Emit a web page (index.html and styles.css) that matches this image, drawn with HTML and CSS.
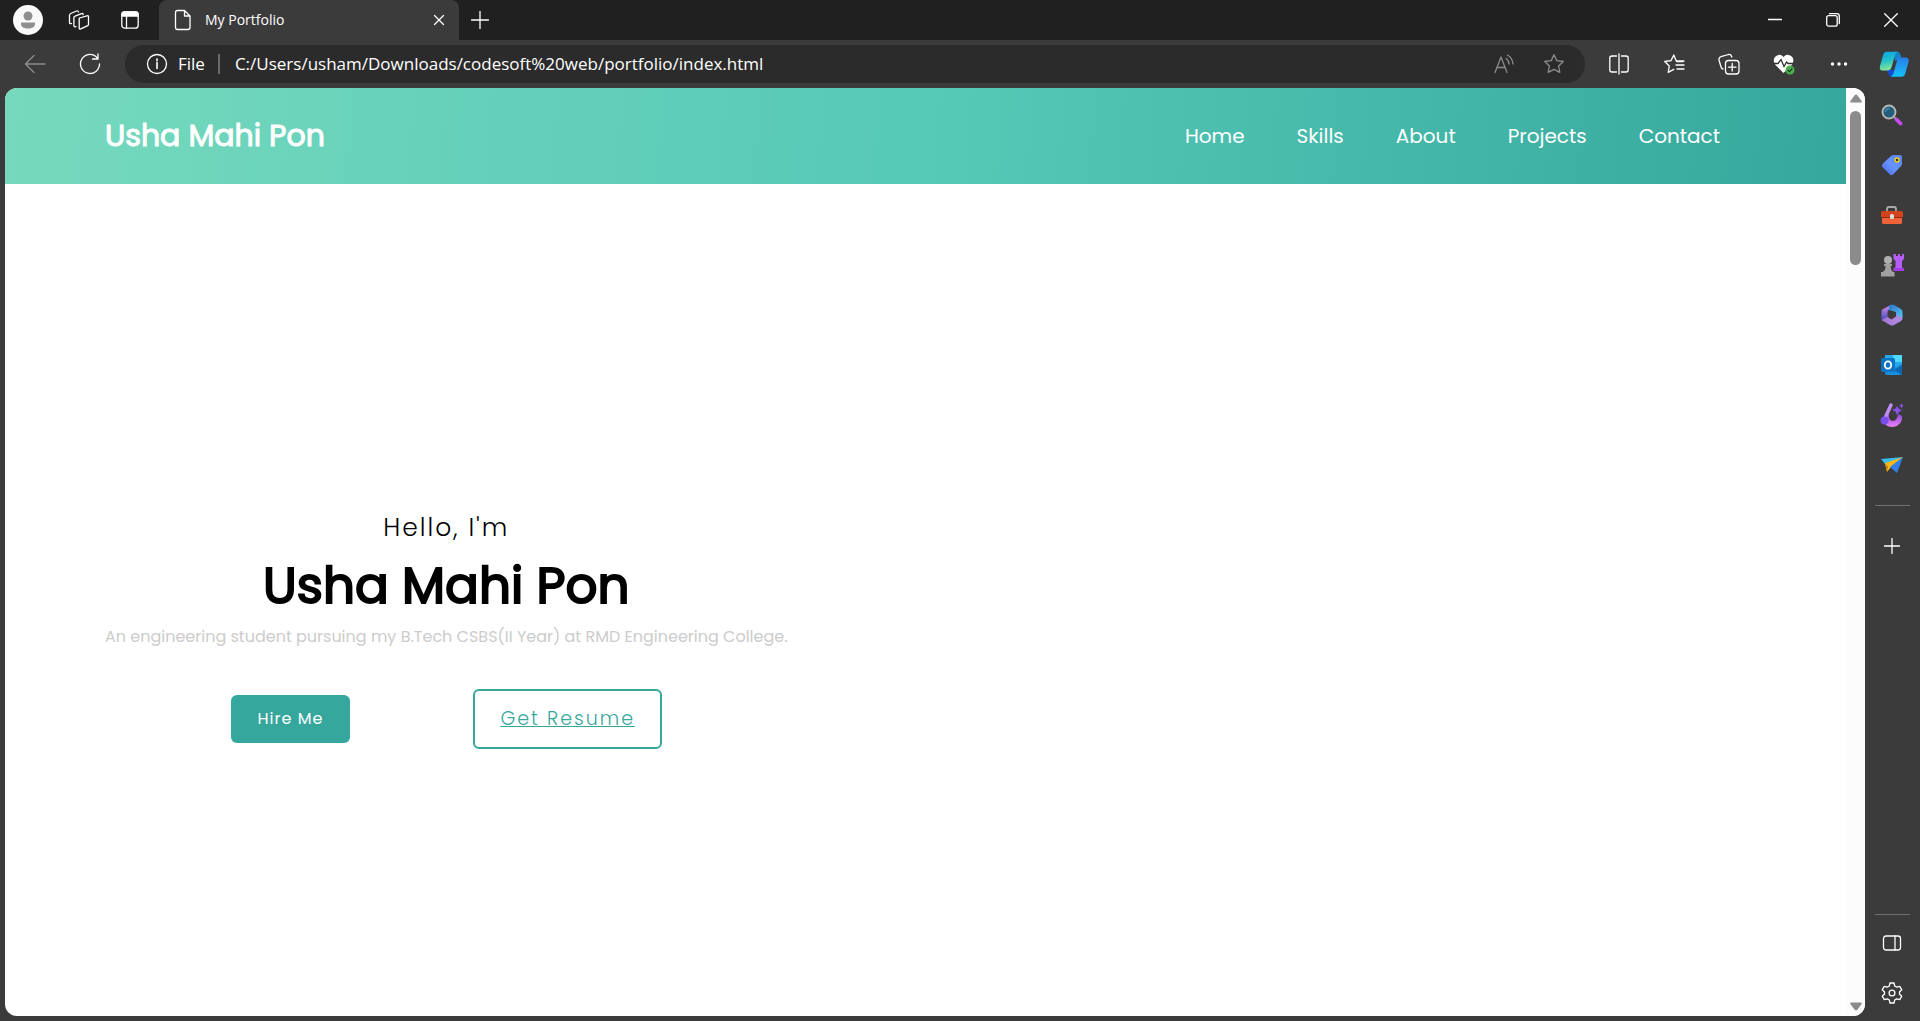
FILE: index.html
```html
<!DOCTYPE html>
<html lang="en">
<head>
<meta charset="utf-8">
<meta name="viewport" content="width=device-width, initial-scale=1">
<title>My Portfolio</title>
<link rel="stylesheet" href="styles.css">
</head>
<body>
<div class="browser">
  <div class="tabstrip">
    <div class="tabstrip-tools">
      <button class="icon-btn" aria-label="Profile"><svg width="30" height="30" viewBox="0 0 30 30"><circle cx="15" cy="15" r="15" fill="#fafafa"/><circle cx="15" cy="11" r="4.5" fill="#8f8f8f"/><path d="M8 17.5h14v1.5c0 3-3 4.5-7 4.5S8 22 8 19z" fill="#8f8f8f"/></svg></button>
      <button class="icon-btn" aria-label="Workspaces"><svg class="line" width="22" height="22" viewBox="0 0 22 22"><path d="M11.5 9l7.500-2.200q1.500-.4 1.500 1v7.400q0 1.200-1.200 1.700l-6.600 3q-1.500.6-1.500-1v-8.200q0-1.300.3-1.700zM8 17.500l-.9.300q-1.200.2-1.200-1.200V8.800q0-1.300 1.200-1.700L13.500 4.600q1.500-.5 1.700 1M3.500 14.500q-2 .7-2-1V6.200Q1.500 5 2.700 4.500L8.500 2Q10 1.500 10.500 3"/></svg></button>
      <button class="icon-btn" aria-label="Tab actions"><svg class="line" width="20" height="20" viewBox="0 0 20 20"><rect x="1.800" y="1.800" width="16.400" height="16.400" rx="3"/><path d="M2 3.500q0-1.500 2-1.500h12q2 0 2 1.500V6H2z" fill="#fff"/><path d="M6.500 6v12"/></svg></button>
    </div>
    <div class="tab">
      <svg class="line" width="18" height="22" viewBox="0 0 18 22"><path d="M3.500 1.500h7l5.500 5.500v11.500q0 2-2 2H3.500q-2 0-2-2v-15q0-2 2-2zM10.500 1.500V7H16"/></svg>
      <span class="tab-title">My Portfolio</span>
      <button class="icon-btn tab-close" aria-label="Close tab"><svg class="line" width="12" height="12" viewBox="0 0 12 12"><path d="M1.500 1.500l9 9M10.500 1.500l-9 9"/></svg></button>
    </div>
    <button class="icon-btn new-tab" aria-label="New tab"><svg class="line" width="18" height="18" viewBox="0 0 18 18"><path d="M9 .5v17M.5 9h17"/></svg></button>
    <div class="window-controls">
      <button class="icon-btn" aria-label="Minimize"><svg class="line" width="14" height="14" viewBox="0 0 14 14"><path d="M.5 6.500h13"/></svg></button>
      <button class="icon-btn" aria-label="Restore"><svg class="line" width="14" height="14" viewBox="0 0 14 14"><rect x=".7" y="2.700" width="10.500" height="10.500" rx="2"/><path d="M3.500.7H11q2.300 0 2.300 2.300v7.500"/></svg></button>
      <button class="icon-btn" aria-label="Close"><svg class="line" width="14" height="14" viewBox="0 0 14 14"><path d="M.7.7l12.600 12.600M13.300.7L.7 13.300"/></svg></button>
    </div>
  </div>

  <div class="toolbar">
    <div class="nav-buttons">
      <button class="icon-btn muted" aria-label="Back"><svg class="line" width="22" height="20" viewBox="0 0 22 20"><path d="M10 1.500L1.500 10l8.500 8.500M1.500 10H21"/></svg></button>
      <button class="icon-btn" aria-label="Refresh"><svg class="line" width="22" height="22" viewBox="0 0 22 22"><path d="M20.500 11a9.500 9.500 0 1 1-3.500-7.400L18.800 5.500M19 1v5h-5.500"/></svg></button>
    </div>
    <div class="address">
      <svg class="line" width="22" height="22" viewBox="0 0 22 22"><circle cx="11" cy="11" r="9.500"/><path d="M11 9.500v6M11 6v1.800" stroke-width="1.600"/></svg>
      <label class="scheme" for="url">File</label>
      <input class="url" id="url" type="text" value="C:/Users/usham/Downloads/codesoft%20web/portfolio/index.html">
      <button class="icon-btn muted" aria-label="Read aloud"><svg class="line" width="22" height="22" viewBox="0 0 22 22"><path d="M2 19.500L8 4l6 15.500M4 14.500h8M13 5.500q3 2 3 5.500M14.500 2q5 3 5.500 9"/></svg></button>
      <button class="icon-btn muted" aria-label="Add to favorites"><svg class="line" width="22" height="22" viewBox="0 0 22 22"><path d="M11 1.800l2.800 5.800 6.500.9-4.700 4.500 1.200 6.400-5.800-3-5.800 3 1.200-6.400L1.700 8.500l6.500-.9z"/></svg></button>
    </div>
    <div class="actions">
      <button class="icon-btn" aria-label="Split screen"><svg class="line" width="22" height="22" viewBox="0 0 22 22"><path d="M8.500 3H4Q1.800 3 1.800 5.200v11.600Q1.800 19 4 19h4.500M13.500 3H18q2.200 0 2.200 2.200v11.600Q20.200 19 18 19h-4.500M11 1v20"/></svg></button>
      <button class="icon-btn" aria-label="Favorites"><svg class="line" width="22" height="22" viewBox="0 0 22 22"><path d="M20 8.500h-6.500L10.800 2 8 7.600l-6.300.9L6.300 13 5.200 19.400l5.600-3M13 12h8M14 16h7M14 8h7"/></svg></button>
      <button class="icon-btn" aria-label="Collections"><svg class="line" width="22" height="22" viewBox="0 0 22 22"><rect x="7.500" y="7.500" width="13.500" height="13.500" rx="3"/><path d="M14.200 10.500v7.500M10.500 14.200H18M5 16q-1.500-.2-2-2L1 7Q.5 4.500 3 3.700L10.500 1.500Q13 1 13.800 4"/></svg></button>
      <button class="icon-btn" aria-label="Browser essentials"><svg width="22" height="22" viewBox="0 0 22 22"><path d="M10.500 20L2.500 12Q-1 7 2.500 3.500 7 0 10.500 4 14-.2 18.800 3.500 22 7 18.800 12z" fill="#fff"/><path d="M0 10.500h5L8 6.500l3 7L13.500 9l1.500 1.500h6" fill="none" stroke="#333" stroke-width="1.300"/><circle cx="17" cy="17" r="4.500" fill="#4caf50"/><path d="M14.700 17l1.700 1.700 3-3.200" fill="none" stroke="#16401a" stroke-width="1.200"/></svg></button>
      <button class="icon-btn" aria-label="Settings and more"><svg width="18" height="6" viewBox="0 0 18 6"><g fill="#fff"><circle cx="2.500" cy="3" r="1.700"/><circle cx="9" cy="3" r="1.700"/><circle cx="15.500" cy="3" r="1.700"/></g></svg></button>
      <button class="icon-btn" aria-label="Copilot"><svg width="30" height="28" viewBox="0 0 32 28"><defs><linearGradient id="ca" x2=".2" y2="1"><stop stop-color="#0aa6e8"/><stop offset=".55" stop-color="#25c0c8"/><stop offset="1" stop-color="#83e59a"/></linearGradient><linearGradient id="cb" x2="0" y2="1"><stop stop-color="#2b7ce9"/><stop offset="1" stop-color="#12c2fa"/></linearGradient></defs><path d="M16 .8h3q3 0 4 3.200l1 3-7 4z" fill="#1782cb"/><path d="M8 20h8v7.500h-2q-3 0-4-3.500z" fill="#174bd4"/><path d="M8.500.8H20q-2 .7-3 4l-3.500 12q-1.200 4-4.500 4H4Q0 20.800 1 16L4.500 4Q5.500.8 8.500.8z" fill="url(#ca)"/><path d="M21.500 7H28q4.500 0 3.500 4.500L28 24q-1 3.500-4 3.500H12.500q2-.7 3-4L19 11q1-4 2.500-4z" fill="url(#cb)"/></svg></button>
    </div>
  </div>

  <div class="workspace">
    <div class="viewport">
      <div class="page">
        <header class="site-header">
          <a class="brand" href="#home">Usha Mahi Pon</a>
          <nav class="site-nav">
            <a href="#home">Home</a>
            <a href="#skills">Skills</a>
            <a href="#about">About</a>
            <a href="#projects">Projects</a>
            <a href="#contact">Contact</a>
          </nav>
        </header>
        <main class="hero" id="home">
          <div class="intro">
            <p class="greeting">Hello, I'm</p>
            <h1 class="name">Usha Mahi Pon</h1>
            <p class="bio">An engineering student pursuing my B.Tech CSBS(II Year) at RMD Engineering College.</p>
            <div class="cta">
              <button class="hire">Hire Me</button>
              <a class="resume" href="#resume">Get Resume</a>
            </div>
          </div>
        </main>
      </div>
      <div class="scrollbar">
        <svg width="12" height="9" viewBox="0 0 12 9"><path d="M6 .5q.8 0 1.300.8L11.600 7q.8 1.500-.8 1.500H1.200Q-.4 8.500.4 7L4.700 1.300Q5.200.5 6 .5z" fill="#8b8b8b"/></svg>
        <div class="track"><div class="thumb"></div></div>
        <svg width="12" height="9" viewBox="0 0 12 9"><path d="M6 8.500q.8 0 1.300-.8L11.600 2q.8-1.500-.8-1.500H1.200Q-.4.5.4 2L4.700 7.700q.5.8 1.300.8z" fill="#8b8b8b"/></svg>
      </div>
    </div>

    <aside class="sidebar">
      <button class="icon-btn" aria-label="Search"><svg width="22" height="22" viewBox="0 0 22 22"><path d="M12 12l3 3" stroke="#999" stroke-width="2"/><path d="M15.500 15.500l4 4" stroke="#c64df5" stroke-width="3.800" stroke-linecap="round"/><circle cx="8" cy="8" r="6.500" fill="#235d7c" stroke="#b4b4b4" stroke-width="2"/><path d="M4.500 8q.5-3.500 4-3.500" fill="none" stroke="#4189ad" stroke-width="1.500"/></svg></button>
      <button class="icon-btn" aria-label="Shopping"><svg width="22" height="22" viewBox="0 0 22 22"><defs><linearGradient id="tg" x1="1" x2="0" y2="1"><stop stop-color="#5a83f7"/><stop offset=".5" stop-color="#6694ff"/><stop offset="1" stop-color="#4c66e8"/></linearGradient></defs><path d="M12 1h7q2 0 2 2v7q0 1-1 2l-8 8.500q-1.500 1.300-3 0L1.500 13q-1.300-1.500 0-3L10 2q1-1 2-1z" fill="url(#tg)"/><circle cx="16" cy="6" r="2" fill="#333" stroke="#f4ce16" stroke-width="1.500"/></svg></button>
      <button class="icon-btn" aria-label="Tools"><svg width="24" height="20" viewBox="0 0 24 20"><path d="M7 6V4q0-2 2-2h5q2 0 2 2v2" fill="none" stroke="#aaa" stroke-width="1.800"/><rect x="2" y="9" width="20" height="10" rx="1.500" fill="#ef6237"/><rect x="1" y="6" width="22" height="6.500" rx="1.500" fill="#d2451c"/><path d="M2 12.500h20" stroke="#8e290a"/><rect x="10" y="9" width="4" height="5" rx="1.500" fill="#ddd"/></svg></button>
      <button class="icon-btn" aria-label="Games"><svg width="24" height="24" viewBox="0 0 24 24"><path d="M13.500 1H16v2h2V1h2v2h2V1h2v5l-2 2v6l2 3v1H13.500v-1l2-3V8l-2-2z" fill="#b45cf5"/><path d="M13.500 15H24v3H13.500z" fill="#a23de8"/><circle cx="8" cy="7" r="4" fill="#b0b0b0"/><path d="M4 11h8v2h-1.500q0 4 2.500 6h1.500v4.500H1V19h1.500Q6 17 5.500 13H4z" fill="#a0a0a0"/></svg></button>
      <button class="icon-btn" aria-label="Microsoft 365"><svg width="22" height="22" viewBox="0 0 22 22"><defs><linearGradient id="ma" x2="0" y2="1"><stop stop-color="#d48be6"/><stop offset="1" stop-color="#474dc4"/></linearGradient><linearGradient id="mb" x2="1" y2="1"><stop stop-color="#2f74c4"/><stop offset="1" stop-color="#54c9fa"/></linearGradient><linearGradient id="mc" x2="1"><stop stop-color="#a476d0"/><stop offset="1" stop-color="#b58be6"/></linearGradient></defs><path d="M10 1L2 5Q.5 6 .5 8v8l6-1V8z" fill="url(#ma)"/><path d="M8 1.500q3-2 6 0l6 3.500q1.500 1 1.500 3v6.500L15 11V8L8 6z" fill="url(#mb)"/><path d="M.5 16l6-3 4 2.500 4.500-3v-2l6.500 3.500q0 2-1.500 3l-7 4q-2 1.200-4 0z" fill="url(#mc)"/></svg></button>
      <button class="icon-btn" aria-label="Outlook"><svg width="22" height="22" viewBox="0 0 22 22"><rect x="4" y="1" width="17" height="14" fill="#28a8ea"/><path d="M12 1h9v7h-9z" fill="#50d9ff"/><path d="M4 11l9 3 8-4v9q0 2-2 2H6q-2 0-2-2z" fill="#1490df"/><path d="M13 16l8-5v10z" fill="#0f67b0"/><rect y="4" width="14" height="14" rx="1.500" fill="#0874c6"/><ellipse cx="7" cy="11" rx="3.200" ry="3.600" fill="none" stroke="#fff" stroke-width="1.900"/></svg></button>
      <button class="icon-btn" aria-label="Image creator"><svg width="24" height="26" viewBox="0 0 24 26"><defs><linearGradient id="ic" x2="0" y2="1"><stop stop-color="#8a43df"/><stop offset="1" stop-color="#eb83f5"/></linearGradient></defs><path d="M4 16q2-4 5-5-1 8 4 8 4 0 5-7l4 2q1 9-9 11-10 0-9-9z" fill="url(#ic)"/><path d="M11 3L5 16" stroke="#bd8cf5" stroke-width="3.500" stroke-linecap="round"/><ellipse cx="4.500" cy="18.500" rx="4" ry="4" fill="#7c4eea"/><path d="M17 4l2 3 3 1-3 2-2 3-1.500-3.500L12 8l3.500-1.500zM21.500 1l.8 2 1.700.8-1.700.8-.8 2-.8-2-1.700-.8 1.700-.8z" fill="#8951ed"/></svg></button>
      <button class="icon-btn" aria-label="Drop"><svg width="24" height="18" viewBox="0 0 24 18"><path d="M1 3L23 1l-6 5L5 8z" fill="#34bdf1"/><path d="M23 1L5 7l2 9 4-5z" fill="#f5b719"/><path d="M23 1L10 11l7 6z" fill="#2f80e8"/><path d="M7 16l-2-8 3 2.500z" fill="#c98108"/></svg></button>
      <div class="divider"></div>
      <button class="icon-btn" aria-label="Customize"><svg class="line" width="16" height="16" viewBox="0 0 16 16"><path d="M8 .5v15M.5 8h15"/></svg></button>
      <div class="sidebar-end">
        <div class="divider"></div>
        <button class="icon-btn" aria-label="Hide sidebar"><svg class="line" width="20" height="18" viewBox="0 0 20 18"><rect x="1.500" y="2" width="17" height="14" rx="2.500"/><path d="M13 2v14"/></svg></button>
        <button class="icon-btn" aria-label="Settings"><svg class="line" width="24" height="24" viewBox="0 0 24 24"><circle cx="12" cy="12" r="2.900"/><path d="M10 2h4l.7 3 2 1.100 3-.8 2 3.400L19.500 11v2l2.200 2.300-2 3.400-3-.8-2 1.100-.7 3h-4l-.7-3-2-1.100-3 .8-2-3.400L4.500 13v-2L2.300 8.700l2-3.400 3 .8 2-1.100z"/></svg></button>
      </div>
    </aside>
  </div>
</div>
</body>
</html>
```
FILE: styles.css
```css
* { box-sizing: border-box; }

body {
  margin: 0;
  background: #3b3b3b;
  color: #fff;
  font-family: "Segoe UI", "Open Sans", "Noto Sans", sans-serif;
}

button, input { font: inherit; color: inherit; }

.browser {
  display: flex;
  flex-direction: column;
  min-height: 100vh;
}

.icon-btn {
  display: flex;
  align-items: center;
  justify-content: center;
  flex: none;
  width: 32px;
  height: 32px;
  padding: 0;
  border: 0;
  background: none;
}

.icon-btn svg { flex: none; }

.line {
  flex: none;
  fill: none;
  stroke: currentColor;
  stroke-width: 1.3;
  stroke-linecap: round;
  stroke-linejoin: round;
}

.muted { color: #8c8c8c; }

/* Tab strip */
.tabstrip {
  display: flex;
  align-items: center;
  height: 40px;
  background: #202020;
}

.tabstrip-tools {
  display: flex;
  gap: 19px;
  padding: 0 13px 0 12px;
}

.tab {
  display: flex;
  align-items: center;
  gap: 13px;
  width: 300px;
  height: 40px;
  padding: 0 4px 0 15px;
  border-radius: 8px 8px 0 0;
  background: #3b3b3b;
}

.tab-title {
  flex: 1;
  padding-bottom: 2px;
  font-size: 14px;
}

.new-tab { margin-left: 5px; }

.window-controls {
  display: flex;
  gap: 26px;
  margin-left: auto;
  padding-right: 13px;
}

/* Toolbar */
.toolbar {
  display: flex;
  align-items: center;
  height: 48px;
  padding-right: 10px;
}

.nav-buttons {
  display: flex;
  gap: 23px;
  padding: 0 19px;
}

.address {
  display: flex;
  align-items: center;
  flex: 1;
  height: 38px;
  padding: 0 15px 0 21px;
  border-radius: 19px;
  background: #2b2b2b;
  font-size: 17px;
}

.scheme {
  margin-left: 10px;
  padding-right: 13px;
  border-right: 2px solid #6b6b6b;
  line-height: 20px;
}

.url {
  flex: 1;
  min-width: 0;
  padding: 0 0 2px 15px;
  border: 0;
  outline: 0;
  background: none;
}

.address .icon-btn + .icon-btn { margin-left: 18px; }

.actions {
  display: flex;
  gap: 23px;
  padding-left: 18px;
}

/* Page area and sidebar */
.workspace {
  display: flex;
  flex: 1;
  padding: 0 0 5px 5px;
}

.viewport {
  display: flex;
  flex: 1;
  overflow: hidden;
  border-radius: 12px;
  background: #fff;
}

.page {
  display: flex;
  flex: 1;
  flex-direction: column;
  color: #000;
  font-family: Poppins, Inter, sans-serif;
}

.scrollbar {
  display: flex;
  flex-direction: column;
  align-items: center;
  gap: 8px;
  width: 19px;
  padding: 6px 0 5px;
  background: #fcfcfc;
}

.track { flex: 1; }

.thumb {
  width: 11px;
  height: 154px;
  border-radius: 6px;
  background: #8b8b8b;
}

.sidebar {
  display: flex;
  flex-direction: column;
  align-items: center;
  gap: 18px;
  width: 55px;
  padding: 11px 1px 0 0;
}

.divider {
  width: 35px;
  height: 1px;
  margin: 6px 0;
  background: #707070;
}

.sidebar-end {
  display: flex;
  flex-direction: column;
  align-items: center;
  gap: 18px;
  margin-top: auto;
  padding-bottom: 7px;
}

.sidebar-end .divider { margin: 0 0 -6px; }

/* Portfolio */
.site-header {
  display: flex;
  align-items: center;
  justify-content: space-between;
  height: 96px;
  padding: 0 126px 0 100px;
  background: linear-gradient(95deg, #76d9bd, #56c9b7 50%, #35a79c);
}

.site-header a { color: #fff; text-decoration: none; }

.site-header .brand {
  font-size: 30px;
  -webkit-text-stroke: 1px currentColor;
}

.site-nav {
  display: flex;
  gap: 52px;
  font-size: 20px;
}

.hero {
  display: flex;
  align-items: center;
  flex: 1;
  padding: 56px 100px 0;
}

.intro { text-align: center; }

.greeting {
  margin: 0;
  font-size: 25px;
  font-weight: 300;
  line-height: 40px;
  letter-spacing: 2px;
}

.name {
  margin: 0;
  font-size: 50px;
  font-weight: 400;
  line-height: 76px;
  -webkit-text-stroke: 2px currentColor;
}

.bio {
  margin: 0;
  color: #ccc;
  font-size: 16px;
  line-height: 26px;
}

.cta {
  display: flex;
  align-items: center;
  justify-content: center;
  gap: 123px;
  margin-top: 39px;
}

.hire {
  padding: 12px 27px;
  border: 0;
  border-radius: 6px;
  background: #35a79c;
  color: #fff;
  font-family: inherit;
  font-size: 16px;
  line-height: 24px;
  letter-spacing: 1px;
}

.resume {
  padding: 13px 25px;
  border: 2px solid #35a79c;
  border-radius: 6px;
  color: #35a79c;
  font-size: 19px;
  font-weight: 300;
  line-height: 30px;
  letter-spacing: 2px;
}
```
